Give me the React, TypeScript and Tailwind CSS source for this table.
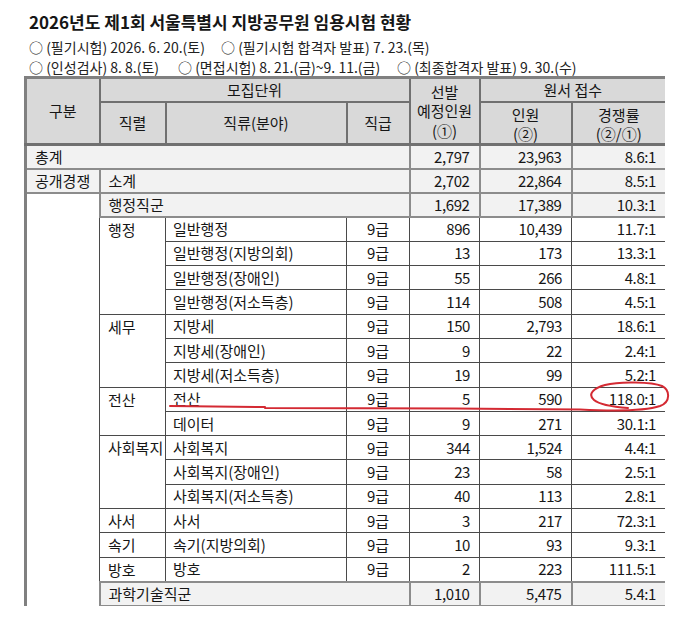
const body = [
  { jr: '행정', span: 4, name: '일반행정', n: '896', a: '10,439', r: '11.7:1' },
  { name: '일반행정(지방의회)', n: '13', a: '173', r: '13.3:1' },
  { name: '일반행정(장애인)', n: '55', a: '266', r: '4.8:1' },
  { name: '일반행정(저소득층)', n: '114', a: '508', r: '4.5:1' },
  { jr: '세무', span: 3, name: '지방세', n: '150', a: '2,793', r: '18.6:1' },
  { name: '지방세(장애인)', n: '9', a: '22', r: '2.4:1' },
  { name: '지방세(저소득층)', n: '19', a: '99', r: '5.2:1' },
  { jr: '전산', span: 2, name: '전산', n: '5', a: '590', r: '118.0:1' },
  { name: '데이터', n: '9', a: '271', r: '30.1:1' },
  { jr: '사회복지', span: 3, name: '사회복지', n: '344', a: '1,524', r: '4.4:1' },
  { name: '사회복지(장애인)', n: '23', a: '58', r: '2.5:1' },
  { name: '사회복지(저소득층)', n: '40', a: '113', r: '2.8:1' },
  { jr: '사서', span: 1, name: '사서', n: '3', a: '217', r: '72.3:1' },
  { jr: '속기', span: 1, name: '속기(지방의회)', n: '10', a: '93', r: '9.3:1' },
  { jr: '방호', span: 1, name: '방호', n: '2', a: '223', r: '111.5:1' },
]

const th = 'border-2 border-[#707070] bg-[#d9d9d9] font-normal text-center align-middle'
const gray = 'border-2 border-[#8c8c8c] bg-[#f2f2f2]'
const cell = 'border border-[#4a4a4a]'
const num = 'text-right pr-[9px] tracking-[-0.4px]'

export default function App() {
  return (
    <div className="relative w-[680px] h-[627px] bg-white text-[#161616] font-['Noto_Sans_CJK_KR',sans-serif]">
      <div className="pl-[29px] pt-[9px]">
        <h1 className="text-[17px] font-bold leading-[26px]">2026년도 제1회 서울특별시 지방공무원 임용시험 현황</h1>
        <div className="mt-[2px] text-[14px] leading-[20px] text-[#222]">
          <div className="flex">
            <span className="w-[192px]">○ (필기시험) 2026. 6. 20.(토)</span>
            <span>○ (필기시험 합격자 발표) 7. 23.(목)</span>
          </div>
          <div className="flex">
            <span className="w-[149px]">○ (인성검사) 8. 8.(토)</span>
            <span className="w-[219px]">○ (면접시험) 8. 21.(금)~9. 11.(금)</span>
            <span>○ (최종합격자 발표) 9. 30.(수)</span>
          </div>
        </div>
      </div>

      <div className="-mt-[1px] ml-[24px] h-[530px] w-[641px] overflow-hidden">
        <table className="w-[641px] table-fixed border-collapse border-[3px] border-[#808080] text-[15px] leading-[22px]">
          <colgroup>
            <col className="w-[74px]" />
            <col className="w-[66px]" />
            <col className="w-[181px]" />
            <col className="w-[63px]" />
            <col className="w-[70px]" />
            <col className="w-[92px]" />
            <col className="w-[95px]" />
          </colgroup>
          <thead>
            <tr className="h-[24px]">
              <th rowSpan={2} className={`${th} border-b-[3px]`}>구분</th>
              <th colSpan={3} className={th}>모집단위</th>
              <th rowSpan={2} className={`${th} border-b-[3px] leading-[19.5px]`}>
                선발<br />예정인원<br />(①)
              </th>
              <th colSpan={2} className={th}>원서 접수</th>
            </tr>
            <tr className="h-[37px]">
              <th className={`${th} border-b-[3px]`}>직렬</th>
              <th className={`${th} border-b-[3px]`}>직류(분야)</th>
              <th className={`${th} border-b-[3px]`}>직급</th>
              <th className={`${th} border-b-[3px] leading-[19px] pt-[2px]`}>인원<br />(②)</th>
              <th className={`${th} border-b-[3px] leading-[19px] pt-[2px]`}>경쟁률<br />(②/①)</th>
            </tr>
          </thead>
          <tbody>
            <tr className="h-[24px]">
              <td colSpan={4} className={`${gray} pl-[8px]`}>총계</td>
              <td className={`${gray} ${num}`}>2,797</td>
              <td className={`${gray} ${num}`}>23,963</td>
              <td className={`${gray} ${num}`}>8.6:1</td>
            </tr>
            <tr className="h-[24px]">
              <td className={`${gray} pl-[8px]`}>공개경쟁</td>
              <td colSpan={3} className={`${gray} pl-[8px]`}>소계</td>
              <td className={`${gray} ${num}`}>2,702</td>
              <td className={`${gray} ${num}`}>22,864</td>
              <td className={`${gray} ${num}`}>8.5:1</td>
            </tr>
            <tr className="h-[24px]">
              <td rowSpan={18} className={`${cell} bg-white`}></td>
              <td colSpan={3} className={`${gray} pl-[8px]`}>행정직군</td>
              <td className={`${gray} ${num}`}>1,692</td>
              <td className={`${gray} ${num}`}>17,389</td>
              <td className={`${gray} ${num}`}>10.3:1</td>
            </tr>
            {body.map((row) => (
              <tr key={row.name} className="h-[24.3px]">
                {row.jr && (
                  <td rowSpan={row.span} className={`${cell} align-top pl-[8px] pt-[1px]`}>
                    {row.jr}
                  </td>
                )}
                <td className={`${cell} pl-[7px]`}>{row.name}</td>
                <td className={`${cell} text-center`}>9급</td>
                <td className={`${cell} ${num}`}>{row.n}</td>
                <td className={`${cell} ${num}`}>{row.a}</td>
                <td className={`${cell} ${num}`}>{row.r}</td>
              </tr>
            ))}
            <tr className="h-[24px]">
              <td colSpan={3} className={`${gray} pl-[8px]`}>과학기술직군</td>
              <td className={`${gray} ${num}`}>1,010</td>
              <td className={`${gray} ${num}`}>5,475</td>
              <td className={`${gray} ${num}`}>5.4:1</td>
            </tr>
            <tr className="h-[24px]">
              <td className={cell}></td>
              <td className={cell}></td>
              <td className={cell}></td>
              <td className={cell}></td>
              <td className={cell}></td>
              <td className={cell}></td>
            </tr>
          </tbody>
        </table>
      </div>

      {/* red pen marks over the 전산 row */}
      <svg className="pointer-events-none absolute left-0 top-0" width="680" height="627" viewBox="0 0 680 627">
        <path
          d="M170 406 Q220 406.6 265 407 L265 408 L455 408.5 L580 409.5 C610 411 645 411 660 406 C671 402 670 390 662 386 C652 382 620 381 605 385 C594 388 587 394 594 400 C600 405 615 407 628 408"
          fill="none"
          stroke="#d42a33"
          strokeWidth="2"
          strokeLinecap="round"
          strokeLinejoin="round"
        />
      </svg>
    </div>
  )
}
